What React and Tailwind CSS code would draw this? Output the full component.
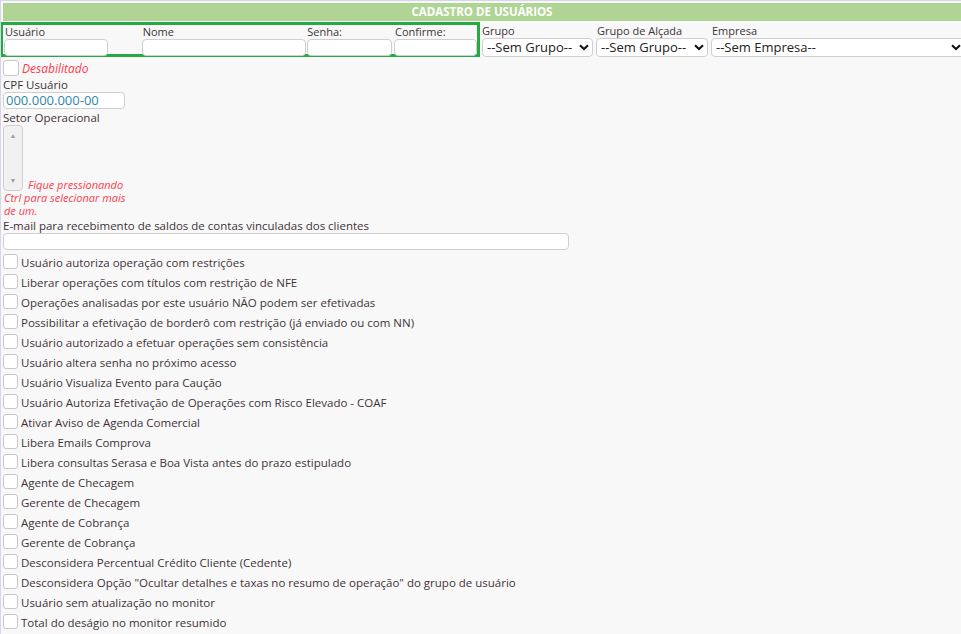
import React from "react";

const checks = [
  "Usuário autoriza operação com restrições",
  "Liberar operações com títulos com restrição de NFE",
  "Operações analisadas por este usuário NÃO podem ser efetivadas",
  "Possibilitar a efetivação de borderô com restrição (já enviado ou com NN)",
  "Usuário autorizado a efetuar operações sem consistência",
  "Usuário altera senha no próximo acesso",
  "Usuário Visualiza Evento para Caução",
  "Usuário Autoriza Efetivação de Operações com Risco Elevado - COAF",
  "Ativar Aviso de Agenda Comercial",
  "Libera Emails Comprova",
  "Libera consultas Serasa e Boa Vista antes do prazo estipulado",
  "Agente de Checagem",
  "Gerente de Checagem",
  "Agente de Cobrança",
  "Gerente de Cobrança",
  "Desconsidera Percentual Crédito Cliente (Cedente)",
  'Desconsidera Opção "Ocultar detalhes e taxas no resumo de operação" do grupo de usuário',
  "Usuário sem atualização no monitor",
  "Total do deságio no monitor resumido",
];

function Input({ w }) {
  return <div className={`${w} h-[17px] shrink-0 rounded-[4px] border border-[#cfcfcf] bg-white`} />;
}

function Sel({ w, text }) {
  return (
    <div className={`${w} h-[19px] rounded-[4px] border border-[#cfcfcf] bg-white flex items-center pl-[4px] pr-[3px] text-[13px] text-[#222]`}>
      <span className="flex-1 whitespace-nowrap leading-none">{text}</span>
      <svg width="10" height="7" viewBox="0 0 10 7"><path d="M1 1.2 L5 5 L9 1.2" fill="none" stroke="#111" strokeWidth="2" /></svg>
    </div>
  );
}

export default function App() {
  return (
    <div
      className="w-[961px] h-[634px] overflow-hidden bg-[#f8f8f8] border-t border-l border-[#d6d6ea] text-[#3f3338] text-[11.5px]"
      style={{ fontFamily: '"Open Sans", sans-serif' }}
    >
      <div className="ml-[2px] mt-[2px] h-[18px] bg-[#b0d494] flex items-center justify-center text-white font-bold text-[11.5px]">
        CADASTRO DE USUÁRIOS
      </div>
      <div className="flex mt-[1px] text-[11px]">
        <div className="-ml-px w-[480px] h-[35px] border-[3px] border-[#27a847] flex pl-[1px]">
          <div className="w-[138px] flex flex-col">
            <div className="h-[14px] leading-[14px] pl-[1px]">Usuário</div>
            <Input w="w-[104px]" />
          </div>
          <div className="w-[166px] flex flex-col">
            <div className="h-[14px] leading-[14px] pl-[1px]">Nome</div>
            <Input w="w-[164px]" />
          </div>
          <div className="w-[87px] flex flex-col">
            <div className="h-[14px] leading-[14px]">Senha:</div>
            <Input w="w-[85px]" />
          </div>
          <div className="w-[83px] flex flex-col">
            <div className="h-[14px] leading-[14px] pl-[1px]">Confirme:</div>
            <Input w="w-[83px]" />
          </div>
        </div>
        <div className="flex gap-[3px] pl-[2px] pt-[2px]">
          <div className="flex flex-col">
            <div className="h-[14px] leading-[14px]">Grupo</div>
            <Sel w="w-[111px]" text="--Sem Grupo--" />
          </div>
          <div className="flex flex-col">
            <div className="h-[14px] leading-[14px] pl-[1px]">Grupo de Alçada</div>
            <Sel w="w-[112px]" text="--Sem Grupo--" />
          </div>
          <div className="flex flex-col">
            <div className="h-[14px] leading-[14px] pl-[1px]">Empresa</div>
            <Sel w="w-[254px]" text="--Sem Empresa--" />
          </div>
        </div>
      </div>
      <div className="pl-[2px]">
        <div className="flex items-end gap-[3px] h-[19px] pt-[2px]">
          <div className="w-4 h-4 shrink-0 rounded-[3px] border border-[#c8c8c8] bg-white" />
          <span className="italic text-[#ff3b4e] text-[12px] leading-[14px]">Desabilitado</span>
        </div>
        <div className="h-[16px] pt-[2px] leading-[14px]">CPF Usuário</div>
        <div className="w-[122px] h-[17px] rounded-[4px] border border-[#cfcfcf] bg-white text-[13px] leading-[15px] text-[#2f86a8] pl-[2px]">
          000.000.000-00
        </div>
        <div className="h-[16px] pt-[2px] leading-[14px]">Setor Operacional</div>
        <div className="flex items-end gap-[5px]">
          <div className="w-[20px] h-[66px] rounded-[4px] border border-[#cfcfcf] bg-[#f1f1f1] flex flex-col items-center justify-between py-[6px] text-[#a0a0a0] text-[7px] leading-none">
            <span>▲</span>
            <span>▼</span>
          </div>
          <span className="italic text-[#ff3b4e] text-[11px] leading-[13px]">Fique pressionando</span>
        </div>
        <div className="italic text-[#ff3b4e] text-[11px] leading-[13px] pl-[1px]">Ctrl para selecionar mais</div>
        <div className="italic text-[#ff3b4e] text-[11px] leading-[13px] pl-[1px]">de um.</div>
        <div className="h-[16px] pt-[2px] leading-[14px]">E-mail para recebimento de saldos de contas vinculadas dos clientes</div>
        <div className="w-[566px] h-[17px] rounded-[4px] border border-[#cfcfcf] bg-white" />
        <div className="mt-[3px]">
          {checks.map((c) => (
            <div key={c} className="h-[20px] flex items-start gap-[3px]">
              <div className="w-[15px] h-[15px] mt-[1px] shrink-0 rounded-[3px] border border-[#c8c8c8] bg-white" />
              <span className="leading-[20px] whitespace-nowrap">{c}</span>
            </div>
          ))}
        </div>
      </div>
    </div>
  );
}
